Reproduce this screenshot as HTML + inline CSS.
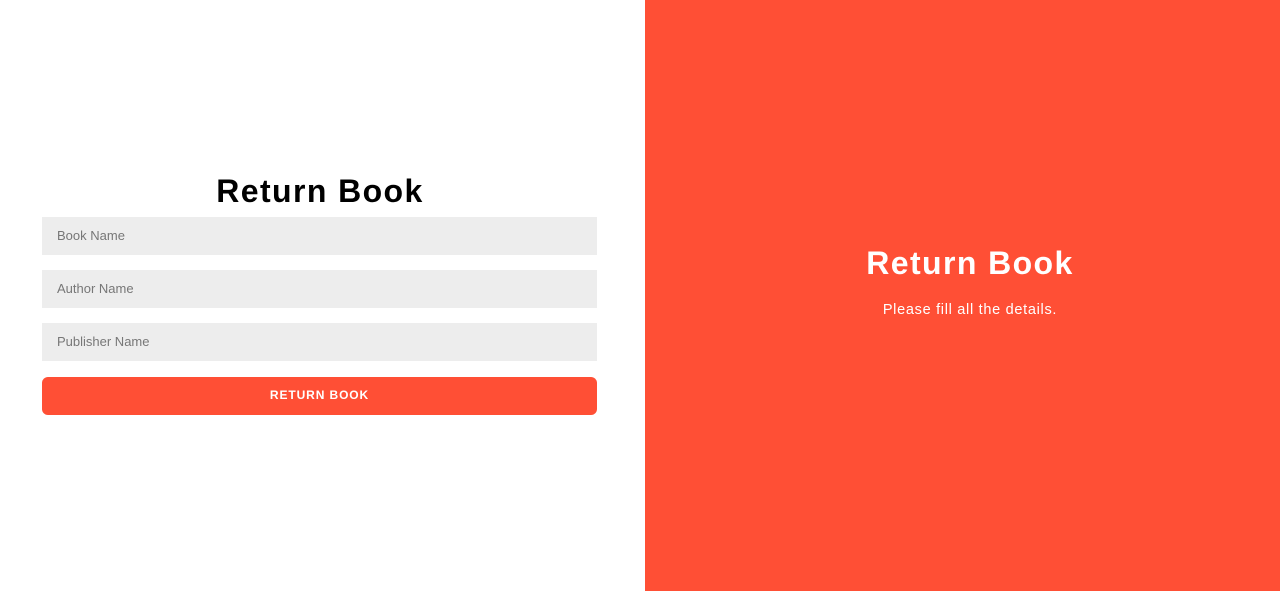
<!DOCTYPE html>
<html><head><style>
html,body{margin:0;padding:0;width:1280px;height:591px;overflow:hidden;font-family:"Liberation Sans",sans-serif;background:#fff}
.left{position:absolute;left:0;top:0;width:645px;height:591px;background:#fff}
.right{position:absolute;left:645px;top:0;width:635px;height:591px;background:#ff4f35;color:#fff;text-align:center}
h1{margin:0;font-weight:bold;font-size:32px;letter-spacing:1.4px}
.lh{position:absolute;left:0;width:640px;top:172px;text-align:center;color:#000;line-height:38px}
.inp{position:absolute;left:42px;width:555px;height:38px;background:#ededed;color:#777;font-size:13px;line-height:38px;text-indent:15px}
.btn{position:absolute;left:42px;top:377px;width:555px;height:38px;background:#ff4f35;border-radius:6px;color:#fff;font-weight:bold;font-size:12px;letter-spacing:.9px;text-align:center;line-height:36px}
.rh{position:absolute;left:0;width:650px;top:244px;line-height:38px}
.rp{position:absolute;left:0;width:650px;top:302px;font-size:14.5px;letter-spacing:.7px}
</style></head><body>
<div class="left">
<h1 class="lh">Return Book</h1>
<div class="inp" style="top:217px">Book Name</div>
<div class="inp" style="top:270px">Author Name</div>
<div class="inp" style="top:323px">Publisher Name</div>
<div class="btn">RETURN BOOK</div>
</div>
<div class="right">
<h1 class="rh">Return Book</h1>
<div class="rp">Please fill all the details.</div>
</div>
</body></html>
